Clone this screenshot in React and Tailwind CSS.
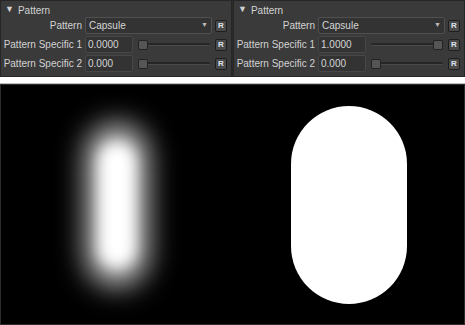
const FONT = { fontFamily: '"Liberation Sans", Arial, sans-serif' }

function RButton(){
  return (
    <div className="w-[12px] h-[12px] rounded-[2px] border border-[#1e1e1e] bg-[#4a4a4a] flex items-center justify-center text-[8px] leading-none text-[#dde4ee] font-bold">R</div>
  )
}

function Slider({ value }){
  return (
    <div className="relative flex-1 h-[12px] flex items-center">
      <div className="w-full h-[3px] rounded-full bg-[#262626] border-b border-[#4a4a4a]" />
      <div
        className="absolute top-[1px] w-[10px] h-[10px] rounded-[2px] bg-[#555] border border-[#222]"
        style={{ left: value ? 'calc(100% - 10px)' : '0px' }}
      />
    </div>
  )
}

function Row({ label, children }){
  return (
    <div className="flex items-center h-[17px] gap-[3px]">
      <div className="w-[81px] text-right text-[10px] text-[#d2d2d2] whitespace-nowrap">{label}</div>
      {children}
    </div>
  )
}

function Panel({ s1, s1val }){
  return (
    <div className="flex-1 bg-[#3a3a3a] border border-[#262626] pt-[3px] pb-[3px] pr-[4px]">
      <div className="flex items-center gap-[4px] pl-[4px] h-[12px] text-[10px] text-[#d2d2d2]">
        <span className="text-[9px]">▼</span>
        <span>Pattern</span>
      </div>
      <div className="flex flex-col gap-[2px] mt-[1px]">
        <Row label="Pattern">
          <div className="flex-1 h-[17px] rounded-[2px] bg-[#333] border border-[#505050] flex items-center justify-between px-[3px] text-[10px] text-[#d6d6d6]">
            <span>Capsule</span>
            <span className="text-[7px] text-[#bbb]">▼</span>
          </div>
          <RButton />
        </Row>
        <Row label="Pattern Specific 1">
          <div className="w-[48px] h-[17px] rounded-[2px] bg-[#333] border border-[#474747] flex items-center px-[2px] text-[10px] text-[#d6d6d6]">{s1}</div>
          <div className="flex-1 flex px-[2px]"><Slider value={s1val} /></div>
          <RButton />
        </Row>
        <Row label="Pattern Specific 2">
          <div className="w-[48px] h-[17px] rounded-[2px] bg-[#333] border border-[#474747] flex items-center px-[2px] text-[10px] text-[#d6d6d6]">0.000</div>
          <div className="flex-1 flex px-[2px]"><Slider value={0} /></div>
          <RButton />
        </Row>
      </div>
    </div>
  )
}

export default function App(){
  return (
    <div className="w-[465px] h-[325px] bg-white flex flex-col overflow-hidden" style={FONT}>
      <div className="flex gap-[1px] bg-[#2a2a2a] h-[77px]">
        <Panel s1="0.0000" s1val={0} />
        <Panel s1="1.0000" s1val={1} />
      </div>
      <div className="h-[7px] bg-white border-b border-[#bbb]" />
      <div className="flex-1 bg-black border border-[#2c2c2c] flex overflow-hidden">
        <div className="w-[232px] flex items-center justify-center">
          <div className="relative w-[80px] h-[180px]">
            <div className="absolute inset-[8px] rounded-full bg-[#bbb] blur-[14px]" />
            <div className="absolute left-[22px] right-[22px] top-[28px] bottom-[28px] rounded-full bg-white blur-[7px]" />
          </div>
        </div>
        <div className="flex-1 flex items-center justify-center">
          <div className="w-[116px] h-[198px] rounded-full bg-white" />
        </div>
      </div>
    </div>
  )
}
